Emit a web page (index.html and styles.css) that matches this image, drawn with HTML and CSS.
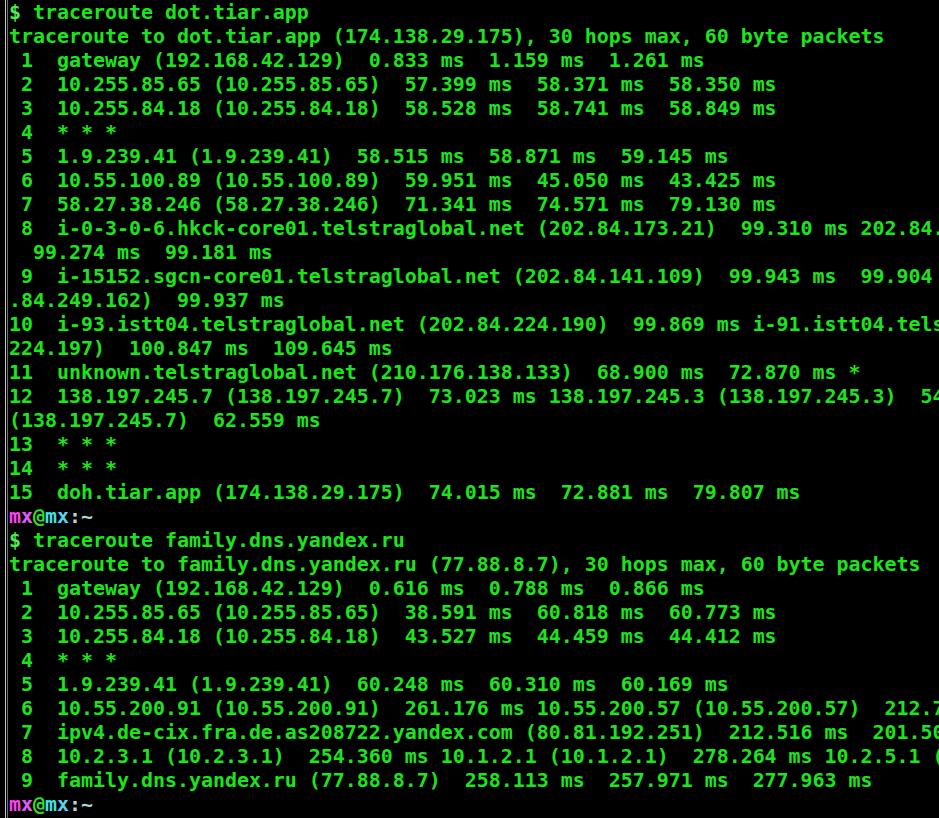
FILE: index.html
```html
<!DOCTYPE html>
<html>
<head>
<meta charset="utf-8">
<link rel="stylesheet" href="styles.css">
</head>
<body>
<div class="frame"><div class="inner"><pre class="term"><span class="dollar">$</span> traceroute dot.tiar.app
traceroute to dot.tiar.app (174.138.29.175), 30 hops max, 60 byte packets
 1  gateway (192.168.42.129)  0.833 ms  1.159 ms  1.261 ms
 2  10.255.85.65 (10.255.85.65)  57.399 ms  58.371 ms  58.350 ms
 3  10.255.84.18 (10.255.84.18)  58.528 ms  58.741 ms  58.849 ms
 4  * * *
 5  1.9.239.41 (1.9.239.41)  58.515 ms  58.871 ms  59.145 ms
 6  10.55.100.89 (10.55.100.89)  59.951 ms  45.050 ms  43.425 ms
 7  58.27.38.246 (58.27.38.246)  71.341 ms  74.571 ms  79.130 ms
 8  i-0-3-0-6.hkck-core01.telstraglobal.net (202.84.173.21)  99.310 ms 202.84.173.25 (202.84.173.25)
  99.274 ms  99.181 ms
 9  i-15152.sgcn-core01.telstraglobal.net (202.84.141.109)  99.943 ms  99.904 ms 202
.84.249.162)  99.937 ms
10  i-93.istt04.telstraglobal.net (202.84.224.190)  99.869 ms i-91.istt04.telstraglobal.net (202.84.
224.197)  100.847 ms  109.645 ms
11  unknown.telstraglobal.net (210.176.138.133)  68.900 ms  72.870 ms *
12  138.197.245.7 (138.197.245.7)  73.023 ms 138.197.245.3 (138.197.245.3)  54.912 ms
(138.197.245.7)  62.559 ms
13  * * *
14  * * *
15  doh.tiar.app (174.138.29.175)  74.015 ms  72.881 ms  79.807 ms
<span class="p-m1">m</span><span class="p-x1">x</span><span class="p-at">@</span><span class="p-m2">m</span><span class="p-x2">x</span><span class="p-tl">:~</span>
<span class="dollar">$</span> traceroute family.dns.yandex.ru
traceroute to family.dns.yandex.ru (77.88.8.7), 30 hops max, 60 byte packets
 1  gateway (192.168.42.129)  0.616 ms  0.788 ms  0.866 ms
 2  10.255.85.65 (10.255.85.65)  38.591 ms  60.818 ms  60.773 ms
 3  10.255.84.18 (10.255.84.18)  43.527 ms  44.459 ms  44.412 ms
 4  * * *
 5  1.9.239.41 (1.9.239.41)  60.248 ms  60.310 ms  60.169 ms
 6  10.55.200.91 (10.55.200.91)  261.176 ms 10.55.200.57 (10.55.200.57)  212.771 ms
 7  ipv4.de-cix.fra.de.as208722.yandex.com (80.81.192.251)  212.516 ms  201.503 ms
 8  10.2.3.1 (10.2.3.1)  254.360 ms 10.1.2.1 (10.1.2.1)  278.264 ms 10.2.5.1 (10.2.5.1)
 9  family.dns.yandex.ru (77.88.8.7)  258.113 ms  257.971 ms  277.963 ms
<span class="p-m1">m</span><span class="p-x1">x</span><span class="p-at">@</span><span class="p-m2">m</span><span class="p-x2">x</span><span class="p-tl">:~</span></pre></div></div>
</body>
</html>
```
FILE: styles.css
```css
html, body {
  margin: 0;
  padding: 0;
  background: #000;
  width: 939px;
  height: 818px;
  overflow: hidden;
}
.frame {
  margin-left: 5px;
  border-left: 1px solid #c8c8c8;
  padding-left: 1px;
  height: 818px;
}
.inner {
  border-left: 1px solid #707070;
  padding-left: 1px;
  padding-top: 1px;
  height: 817px;
}
.term {
  margin: 0;
  font-family: "DejaVu Sans Mono", monospace;
  font-weight: bold;
  font-size: 19.93px;
  line-height: 24px;
  color: #1ee41e;
  white-space: pre;
}
.dollar { color: #4eea4e; }
.p-m1 { color: #ff44ee; }
.p-x1 { color: #e05cff; }
.p-at { color: #2ee02e; }
.p-m2 { color: #44e0e0; }
.p-x2 { color: #5cd0f0; }
.p-tl { color: #a8d8d8; }
```
